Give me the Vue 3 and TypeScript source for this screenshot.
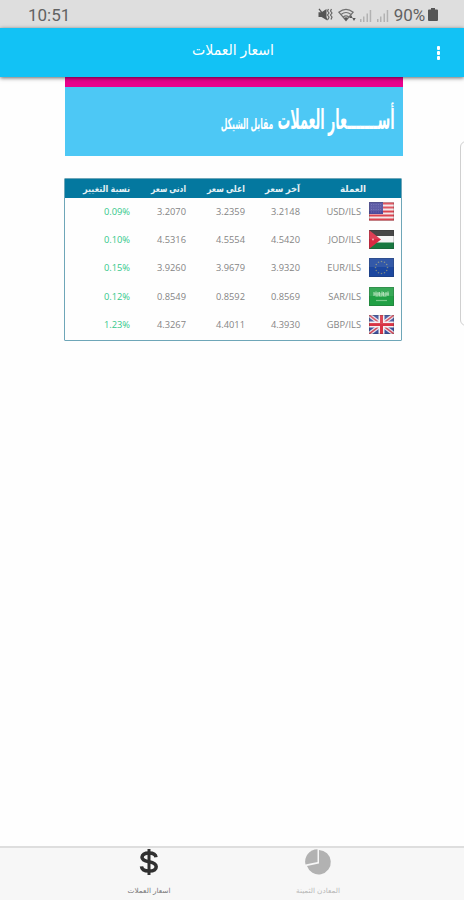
<script setup lang="ts">
interface Rate {
  pair: string
  flag: 'us' | 'jo' | 'eu' | 'sa' | 'gb'
  last: string
  high: string
  low: string
  change: string
}

interface Heading {
  label: string
  width: number
}

const headings: Heading[] = [
  { label: 'العملة', width: 26 },
  { label: 'آخر سعر', width: 35 },
  { label: 'اعلى سعر', width: 38 },
  { label: 'ادنى سعر', width: 35 },
  { label: 'نسبة التغيير', width: 47 },
]

const rates: Rate[] = [
  { pair: 'USD/ILS', flag: 'us', last: '3.2148', high: '3.2359', low: '3.2070', change: '0.09%' },
  { pair: 'JOD/ILS', flag: 'jo', last: '4.5420', high: '4.5554', low: '4.5316', change: '0.10%' },
  { pair: 'EUR/ILS', flag: 'eu', last: '3.9320', high: '3.9679', low: '3.9260', change: '0.15%' },
  { pair: 'SAR/ILS', flag: 'sa', last: '0.8569', high: '0.8592', low: '0.8549', change: '0.12%' },
  { pair: 'GBP/ILS', flag: 'gb', last: '4.3930', high: '4.4011', low: '4.3267', change: '1.23%' },
]

const stars = Array.from({ length: 12 }, (_, i) => ({
  x: 12.5 + 6 * Math.sin((i * Math.PI) / 6),
  y: 9.5 - 6 * Math.cos((i * Math.PI) / 6),
}))
</script>

<template>
  <div class="screen">
    <div class="status">
      <span class="clock">10:51</span>
      <div class="indicators">
        <svg class="mute" viewBox="0 0 15 13" width="15" height="13">
          <path d="M0.5 4.3h3L8.500 1v11L3.500 9h-3z" fill="#555" />
          <path d="M1 .8l8.500 11.400" stroke="#555" stroke-width="1.300" />
          <path d="M10.500 1l-1 2 1.500 2-1.500 2 1.500 2-1 2.500M13.500 1l-1 2 1.500 2-1.500 2 1.500 2-1 2.500" fill="none" stroke="#666" stroke-width="1.200" />
        </svg>
        <svg class="wifi" viewBox="0 0 19 14" width="19" height="14">
          <g fill="none" stroke="#707070" stroke-width="1.200">
            <path d="M.8 4.200Q8 -1.500 15.200 4.200L8 12.500z" />
            <path d="M3 6.500Q8 2.500 13 6.500M5.200 9Q8 6.800 10.800 9" />
          </g>
          <path d="M8 12.800L6 10Q8 8.500 10 10zM13 7l1.700 3h-3.400zM16 13l-1.700-3h3.400z" fill="#555" />
        </svg>
        <svg class="signal" viewBox="0 0 13 12" width="13" height="12">
          <path d="M1 9h1.500v3H1zM4 6.500h1.500V12H4zM7.500 3.500H9V12H7.500zM10.700 0h1.500v12h-1.500z" fill="#b2b2b2" />
        </svg>
        <svg class="signal second" viewBox="0 0 13 12" width="13" height="12">
          <path d="M1 9h1.500v3H1zM4 6.500h1.500V12H4zM7.500 3.500H9V12H7.500zM10.700 0h1.500v12h-1.500z" fill="#b2b2b2" />
        </svg>
        <span class="percent">90%</span>
        <svg class="battery" viewBox="0 0 10 13" width="10" height="13">
          <path d="M3 0h4v1.500h2q1 0 1 1V12q0 1-1 1H1q-1 0-1-1V2.500q0-1 1-1h2z" fill="#555" />
        </svg>
      </div>
    </div>

    <header class="appbar">
      <svg class="title" width="84" height="28">
        <text x="42" y="16.500" text-anchor="middle" textLength="82" lengthAdjust="spacingAndGlyphs">اسعار العملات</text>
      </svg>
      <div class="more"><i /><i /><i /></div>
    </header>

    <main class="content">
      <section class="banner">
        <svg width="338" height="69">
          <g transform="translate(271 42) scale(.6 1)">
            <text class="headline" text-anchor="middle" textLength="195" lengthAdjust="spacingAndGlyphs">أســـــــعار العملات</text>
          </g>
          <g transform="translate(182 42) scale(.65 1)">
            <text class="subline" text-anchor="middle" textLength="81" lengthAdjust="spacingAndGlyphs">مقابل الشيكل</text>
          </g>
        </svg>
      </section>

      <section class="table">
        <div class="row head">
          <div v-for="h in headings" :key="h.label" class="cell">
            <svg :width="h.width" height="19">
              <text :x="h.width / 2" y="12.500" text-anchor="middle" :textLength="h.width" lengthAdjust="spacingAndGlyphs">{{ h.label }}</text>
            </svg>
          </div>
        </div>
        <div v-for="r in rates" :key="r.pair" class="row">
          <div class="cell currency">
            <svg class="flag" viewBox="0 0 25 19" width="25" height="19">
              <template v-if="r.flag === 'us'">
                <rect width="25" height="19" fill="#f3e6e8" />
                <path d="M0 1.500h25M0 5.500h25M0 9.500h25M0 13.500h25M0 17.500h25" stroke="#dc4450" stroke-width="2" />
                <rect width="14" height="12" fill="#4d4b9c" />
                <path d="M2 2.500h10M2 5h10M2 7.500h10M2 10h10" stroke="#7774b6" stroke-width=".8" stroke-dasharray="1 1.300" />
              </template>
              <template v-else-if="r.flag === 'jo'">
                <rect width="25" height="19" fill="#f5f5f5" />
                <rect width="25" height="6" fill="#333" />
                <rect y="12.500" width="25" height="6.500" fill="#187840" />
                <path d="M0 0l12 9.500L0 19z" fill="#d92a42" />
                <circle cx="4" cy="9.500" r="1.100" fill="#f0a0aa" />
              </template>
              <template v-else-if="r.flag === 'eu'">
                <rect width="25" height="19" fill="#1c479f" />
                <circle v-for="(s, i) in stars" :key="i" :cx="s.x" :cy="s.y" r=".8" fill="#7d8880" />
              </template>
              <template v-else-if="r.flag === 'sa'">
                <rect width="25" height="19" fill="#21a045" />
                <path d="M5 5v4M7 4.500v4.500h2V5M10.500 5v4h2.500V4.500M14.500 5v4H17V5M19 4.500V9M5 7h15" fill="none" stroke="#a5dcae" stroke-width="1.100" />
                <path d="M7 13.500h11" stroke="#7bc98b" stroke-width="1.200" />
              </template>
              <template v-else>
                <rect width="25" height="19" fill="#3c519b" />
                <path d="M0 0l25 19M25 0L0 19" stroke="#e6e2ec" stroke-width="4" />
                <path d="M0 0l25 19M25 0L0 19" stroke="#d24b5c" stroke-width="1.500" />
                <path d="M12.500 0v19M0 9.500h25" stroke="#f5f0f2" stroke-width="6" />
                <path d="M12.500 0v19M0 9.500h25" stroke="#d83445" stroke-width="3" />
              </template>
              <rect class="gloss" width="25" height="9" fill="#fff" opacity=".1" />
              <rect x=".5" y=".5" width="24" height="18" fill="none" stroke="#222" stroke-opacity=".18" />
            </svg>
            <span class="pair">{{ r.pair }}</span>
          </div>
          <div class="cell">{{ r.last }}</div>
          <div class="cell">{{ r.high }}</div>
          <div class="cell">{{ r.low }}</div>
          <div class="cell change">{{ r.change }}</div>
        </div>
      </section>
      <div class="edge-handle" />
    </main>

    <nav class="tabs">
      <div class="tab active">
        <svg class="icon" viewBox="0 0 20 26" width="20" height="26">
          <path d="M10 0v26" stroke="#303030" stroke-width="3" />
          <path d="M17 8.200Q16.500 4 10 4T3 8.200Q3 11.500 10 12.700T17.200 17.700Q17.200 22 10 22T2.500 17.300" fill="none" stroke="#303030" stroke-width="3.500" />
        </svg>
        <svg class="label" width="44" height="16">
          <text x="22" y="10" text-anchor="middle" textLength="43" lengthAdjust="spacingAndGlyphs">اسعار العملات</text>
        </svg>
      </div>
      <div class="tab">
        <svg class="icon" viewBox="0 0 26 26" width="26" height="26">
          <path d="M14 1A12.200 12.200 0 1 1 2 17L14 14.500z" fill="#b2b2b2" />
          <path d="M12.500 .3V13L.5 15.500A12.200 12.200 0 0 1 12.500 .3z" fill="#b2b2b2" />
        </svg>
        <svg class="label" width="46" height="16">
          <text x="23" y="10" text-anchor="middle" textLength="44" lengthAdjust="spacingAndGlyphs">المعادن الثمينة</text>
        </svg>
      </div>
    </nav>
  </div>
</template>

<style>
body {
  margin: 0;
  overflow: hidden;
}
</style>

<style scoped>
.screen {
  width: 464px;
  height: 900px;
  display: flex;
  flex-direction: column;
  overflow: hidden;
  background: #fefefe;
  font-family: "Noto Sans", "DejaVu Sans", sans-serif;
}
svg {
  display: block;
  flex: none;
  overflow: visible;
}
.flag {
  overflow: hidden;
}
.status {
  height: 28px;
  flex: none;
  box-sizing: border-box;
  padding: 0 26px 0 28px;
  display: flex;
  justify-content: space-between;
  align-items: center;
  background: #dedede;
  color: #626262;
  font: 17px/28px Roboto, sans-serif;
}
.clock {
  padding-top: 1px;
}
.indicators {
  display: flex;
  align-items: center;
  padding-top: 1px;
}
.wifi {
  margin-left: 5px;
}
.signal {
  margin: 2px 0 0 2px;
}
.second {
  margin-left: 4px;
}
.percent {
  margin: 0 3px 0 5px;
  letter-spacing: -0.1px;
}
.appbar {
  position: relative;
  z-index: 1;
  height: 49px;
  flex: none;
  box-sizing: border-box;
  padding: 10px 24px 0 191px;
  display: flex;
  justify-content: space-between;
  align-items: flex-start;
  background: #12c2f5;
  box-shadow: 0 1px 4px rgba(0, 0, 0, 0.6);
}
.title text {
  font-size: 15px;
  fill: #fff;
}
.more {
  display: flex;
  flex-direction: column;
  gap: 1.500px;
  padding-top: 8px;
}
.more i {
  width: 3.500px;
  height: 3.500px;
  border-radius: 1px;
  background: #fff;
}
.content {
  flex: 1;
  position: relative;
}
.banner {
  width: 338px;
  margin-left: 65px;
  border-top: 10px solid #e9028c;
  background: #4dc8f5;
}
.banner text {
  fill: #fff;
  font-weight: 700;
}
.headline {
  font-size: 27px;
}
.subline {
  font-size: 15px;
}
.table {
  width: 336px;
  height: 161px;
  margin: 22px 0 0 64px;
  border: 1px solid #6ea6b8;
  border-radius: 1px;
  direction: rtl;
}
.row {
  height: 28.400px;
  display: grid;
  grid-template-columns: 101px 55px 59px 56px 65px;
  align-items: center;
  color: #858585;
  font-family: "Open Sans", sans-serif;
  font-size: 9.300px;
}
.row:not(.head) {
  position: relative;
  top: -1px;
}
.head {
  height: 19px;
  background: #04789f;
}
.head .cell:first-child {
  padding-right: 35px;
}
.head text {
  font-family: "Noto Sans", "DejaVu Sans", sans-serif;
  font-size: 9px;
  font-weight: 700;
  fill: #e5f1f5;
}
.currency {
  display: flex;
  align-items: center;
  gap: 8px;
  padding-right: 7px;
}
.change {
  color: #35c88b;
}
.edge-handle {
  position: absolute;
  right: -8px;
  top: 64px;
  width: 10px;
  height: 183px;
  border: 1px solid #d0d0d0;
  border-radius: 6px;
}
.tabs {
  height: 54px;
  flex: none;
  box-sizing: border-box;
  border-top: 2px solid #dedede;
  padding: 0 62px 0 64px;
  display: grid;
  grid-template-columns: 1fr 1fr;
  background: #f7f7f7;
}
.tab {
  display: flex;
  flex-direction: column;
  align-items: center;
  gap: 8px;
  padding-top: 1px;
}
.label text {
  font-size: 7px;
  fill: #b8b8b8;
}
.active .label text {
  fill: #777;
}
</style>
